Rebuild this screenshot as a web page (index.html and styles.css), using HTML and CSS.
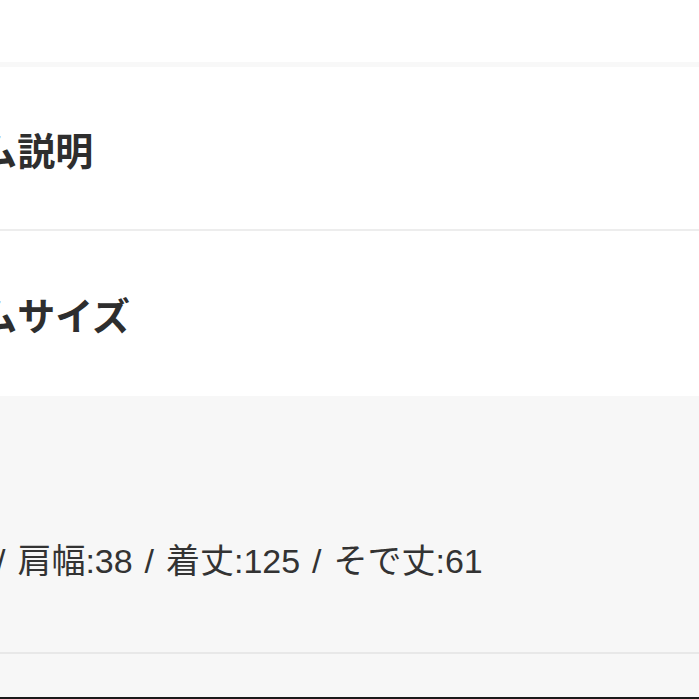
FILE: index.html
```html
<!DOCTYPE html>
<html lang="ja">
<head>
<meta charset="utf-8">
<title>アイテム詳細</title>
<link rel="stylesheet" href="styles.css">
</head>
<body>
<div class="page">
  <div class="top"></div>
  <div class="sep-soft"></div>
  <section class="heading">
    <h2 class="title">アイテム説明</h2>
  </section>
  <div class="sep"></div>
  <section class="heading heading-size">
    <h2 class="title">アイテムサイズ</h2>
  </section>
  <section class="sizes">
    <p class="size-text">/ 肩幅:38 / 着丈:125 / そで丈:61</p>
  </section>
  <div class="sep sep-gray"></div>
  <div class="bottom"></div>
  <div class="edge"></div>
</div>
</body>
</html>
```

FILE: styles.css
```css
html, body {
  margin: 0;
  padding: 0;
  background: #ffffff;
}
body {
  font-family: "Noto Sans CJK JP", "Noto Sans", sans-serif;
  color: #333333;
}
.page {
  width: 699px;
  height: 699px;
  overflow: hidden;
  display: flex;
  flex-direction: column;
}
.top {
  height: 62px;
  background: #ffffff;
}
.sep-soft {
  height: 5px;
  background: #f8f8f8;
}
.heading {
  height: 162px;
  display: flex;
  align-items: center;
  background: #ffffff;
}
.heading-size {
  height: 165px;
}
.title {
  margin: 0 0 0 -131px;
  font-size: 38px;
  font-weight: 700;
  line-height: 1.5;
  white-space: nowrap;
  color: #2e2e2e;
}
.sep {
  height: 2px;
  background: #ededed;
}
.sizes {
  height: 256px;
  background: #f7f7f7;
  box-sizing: border-box;
  padding-top: 140px;
}
.size-text {
  margin: 0 0 0 -4px;
  font-family: "Liberation Sans", "Noto Sans CJK JP", sans-serif;
  font-size: 34px;
  font-weight: 400;
  line-height: 1.5;
  word-spacing: 2.5px;
  white-space: nowrap;
  color: #333333;
}
.sep-gray {
  background: #e8e8e8;
}
.bottom {
  height: 43px;
  background: #f7f7f7;
}
.edge {
  height: 2px;
  background: #1a1a1a;
}
```
